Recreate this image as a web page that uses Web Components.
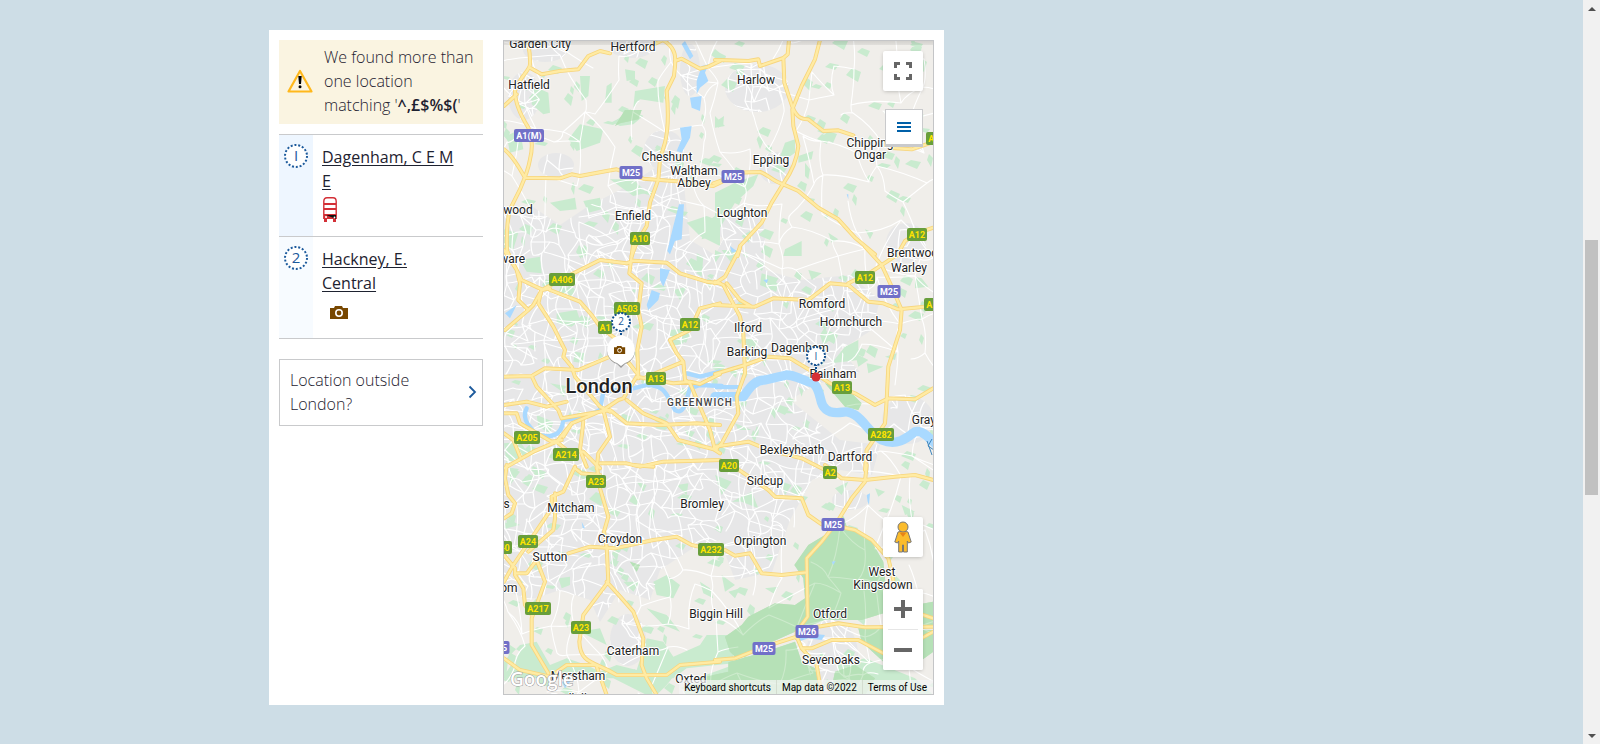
<!DOCTYPE html>
<html lang="en">
<head>
<meta charset="utf-8">
<meta name="viewport" content="width=device-width, initial-scale=1">
<title>Location results</title>
<style>
body{margin:0;background:#cddde6;font-family:"Open Sans","Noto Sans",sans-serif;font-size:16px;line-height:24px;color:#1e2230}
</style>
</head>
<body>
<page-shell>
  <results-card>
    <notice-box slot="list">We found more than one location matching '<strong>^,£$%$(</strong>'</notice-box>
    <place-row slot="list" number="1" kind="bus">Dagenham, C E M E</place-row>
    <place-row slot="list" number="2" kind="camera">Hackney, E. Central</place-row>
    <outside-link slot="list">Location outside London?</outside-link>
    <map-view slot="map"></map-view>
  </results-card>
</page-shell>
<script>
class Base extends HTMLElement{
  constructor(){super();this.attachShadow({mode:'open'});}
  connectedCallback(){if(!this.shadowRoot.firstChild)this.shadowRoot.innerHTML='<style>*{box-sizing:border-box}'+this.css()+'</style>'+this.html();}
}
const CAMERA='<path fill="#784700" d="M0 2h4l1-2h7l1 2h5v11H0z"/><circle cx="9" cy="7" r="3.2" fill="none" stroke="#fff" stroke-width="1.6"/>';

customElements.define('page-shell',class extends Base{
  css(){return `:host{display:flex;min-height:100vh}
    main{flex:1;min-width:0;padding:30px 16px 39px}
    .wrap{max-width:1045px;margin:0 auto}`}
  html(){return `<main><div class="wrap"><slot></slot></div></main><page-scrollbar></page-scrollbar>`}
});

customElements.define('page-scrollbar',class extends Base{
  css(){return `:host{box-sizing:border-box;display:grid;grid-template-rows:17px 223fr 255fr 232fr 17px;width:17px;height:100vh;position:sticky;top:0;background:#f1f1f1}
    i{grid-row:3;background:#c1c1c1;margin:0 2px}svg{display:block}.down{grid-row:5}`}
  html(){return `<svg width="17" height="17"><path d="M5 11l4-4 4 4z" fill="#505050"/></svg><i></i><svg class="down" width="17" height="17"><path d="M5 7l4 4 4-4z" fill="#505050"/></svg>`}
});

customElements.define('results-card',class extends Base{
  css(){return `:host{box-sizing:border-box;display:grid;grid-template-columns:204px 1fr;gap:20px;max-width:675px;padding:10px;background:#fff}
    .list{min-width:0}.map{min-width:0}`}
  html(){return `<div class="list"><slot name="list"></slot></div><div class="map"><slot name="map"></slot></div>`}
});

customElements.define('notice-box',class extends Base{
  css(){return `:host{box-sizing:border-box;display:grid;grid-template-columns:28px 1fr;gap:9px;align-items:center;padding:5px 4px 7px 8px;margin-bottom:10px;background:#faf4e1;font-weight:300}
    p{margin:0}svg{display:block}::slotted(strong){font-weight:600}`}
  html(){return `<svg width="26" height="24" viewBox="0 0 26 24"><path d="M13 2L24.5 22.500H1.500z" fill="none" stroke="#ffb81c" stroke-width="2.200" stroke-linejoin="round"/><path d="M11.300 7h3.400l-.7 8h-2z"/><circle cx="13" cy="17.800" r="1.500"/></svg><p><slot></slot></p>`}
});

customElements.define('place-row',class extends Base{
  css(){return `:host{box-sizing:border-box;display:grid;grid-template-columns:34px 1fr;gap:9px;border-top:1px solid #c9cacc;min-height:102px}
    :host([number="2"]){border-bottom:1px solid #c9cacc;margin-bottom:20px;min-height:103px;--tint:#f7fbff}
    .num{background:var(--tint,#eef6ff);padding:8px 4px}
    svg{display:block}
    .body{padding:10px 24px 10px 0}
    a{display:block;color:#1e2230;font-weight:500;text-decoration:underline;text-underline-offset:2px}
    text{font:400 15px "Open Sans",sans-serif;fill:#1c5a9c;text-anchor:middle}
    .bus{margin:4px 0 0 1px}.camera{margin:11px 0 0 8px}`}
  html(){const n=this.getAttribute('number'),bus=this.getAttribute('kind')==='bus';
    return `<div class="num"><svg width="26" height="26" viewBox="0 0 26 26"><circle cx="13" cy="13" r="11" fill="#fff" stroke="#1c5a9c" stroke-width="2" stroke-dasharray="2 1.840"/><text x="13" y="18">${n==='1'?'I':n}</text></svg></div>
    <div class="body"><a href="#place-${n}"><slot></slot></a>${bus?
    `<svg class="bus" width="14" height="25" viewBox="0 0 14 25" role="img" aria-label="Bus"><path d="M.8 22V4.500Q.8 .8 4 .8H10Q13.200 .8 13.200 4.500V22" fill="#fff" stroke="#d32f36" stroke-width="1.400"/><path d="M1 6h12v2H1zM1 11h12v2H1zM1 17h12v5H1zM1 22h3v3H1zM10 22h3v3h-3z" fill="#d32f36"/><path d="M3 18l10 0v4z" fill="#111"/><circle cx="3" cy="20" r="1.100" fill="#fff"/><circle cx="11.500" cy="20.500" r=".9" fill="#fff"/></svg>`:
    `<svg class="camera" width="18" height="13" viewBox="0 0 18 13" role="img" aria-label="Attraction">${CAMERA}</svg>`}</div>`}
});

customElements.define('outside-link',class extends Base{
  css(){return `:host{display:block;font-weight:300}
    a{display:flex;align-items:center;gap:10px;padding:8px 5px 9px 10px;border:1px solid #c9cacc;color:inherit;text-decoration:none}
    span{flex:1;padding-right:30px}svg{display:block}`}
  html(){return `<a href="#outside"><span><slot></slot></span><svg width="9" height="14" viewBox="0 0 9 14"><path d="M1.500 1.500L7 7l-5.500 5.500" fill="none" stroke="#1c5a9c" stroke-width="1.800"/></svg></a>`}
});

/* Main roads and areas, one sheet per tile: origin of the tile, then paths at three units to the pixel. */
const TILES=[
 {x:500,y:36,roads:`M80 0C85 30 92 50 90 85C88 105 60 120 45 165C45 200 60 235 85 275C95 310 100 330 90 370C85 400 75 425 60 460L30 520C20 560 18 600 22 660
  M12 210L50 175M90 95L125 115L180 105L235 100L265 60L300 45L330 52M440 35L485 14
  M485 10C540 40 525 80 522 120L500 165C505 220 505 280 495 320L480 370L475 430L450 500L440 570L410 620L395 660
  M12 340C40 360 60 400 75 425L180 427L215 415L240 420L320 405L350 400L430 428L530 436L640 450L665 438
  M525 75L545 68L600 98L625 92L660 75`,
  green:`M100 150L145 170L150 230L130 235L95 205ZM240 120L270 120L265 180L245 195ZM405 165L495 150L490 200L420 190L400 215ZM375 100L405 105L405 130L380 135ZM240 265L310 280L300 320L230 345L205 310ZM20 300L60 280L70 340L30 350ZM340 260L390 220L430 240L400 265L360 270ZM250 495L300 485L305 520L265 530ZM150 500L225 485L230 520L180 525ZM560 560L620 540L660 555V630L600 600ZM12 580L55 590L40 640L12 640ZM320 150L335 140V200L315 200ZM650 255L672 240L670 265L655 275ZM330 430L400 430L440 470L400 480Z`,
  deep:`M345 270L375 222L425 222L415 250L360 262Z`,
  water:`M545 25L555 15L580 60L570 70ZM590 135L605 90L625 85L615 110L625 135L600 155L590 175ZM570 185L605 180L600 225L575 215ZM540 275L575 270L570 305L545 350L530 345L545 310ZM537 505H552L545 610L525 615L510 655L502 645L520 570Z`},
 {x:715,y:36,roads:`M0 72L40 73L100 75L130 70L135 90L205 66L218 55L222 12M205 65L208 140L228 200C240 240 255 250 280 250L325 285L370 283L415 298
  M315 12L300 70L260 150L232 220L235 270L250 330C245 380 225 415 205 443L170 500L140 560L75 630L68 660
  M-5 442L30 430L60 410L135 408C160 415 170 435 205 445L250 465L310 515L370 550L420 605L480 655
  M520 335L590 340L655 318M655 575L610 590L570 615L545 660`,
  green:`M0 470L60 440L130 415L115 450L60 500L0 600L-40 610L-30 560L0 540ZM130 300L145 315L135 340L125 310ZM250 360L295 345L290 370L250 380ZM210 640L260 615L260 660H205ZM450 580L475 590L465 610ZM80 600L130 570L100 620ZM210 320L240 310L240 350L185 390ZM0 240L30 270L0 275ZM270 380L285 400L280 430L270 420ZM340 590L370 610L350 620Z`,
  deep:'',water:`M395 475L400 475L400 490ZM45 630L65 645L50 650Z`},
 {x:500,y:250,roads:`M12 0L50 60L60 100L55 150L85 180L100 165L125 120L150 115M20 0L65 90L125 118M85 180L15 240
  M125 120L210 75L300 30L380 40L400 32L500 38L540 70L620 95L660 100M400 -20L388 70L425 100L415 180L425 230L412 300L415 385
  M150 120L240 155L275 195L300 230L345 265L380 330L415 375M125 120L115 160L160 230L195 300L190 320L215 350L225 380L300 470L330 485
  M12 380L95 378L135 355L235 360L330 320L345 330M660 160L600 175L570 240L510 270L530 310L550 335L555 390L570 400L600 470L630 540L645 600L660 610
  M550 335L430 385M410 380L520 400L570 395L600 402L660 372M12 465L80 455L140 470L200 455M95 378L110 410L175 480L185 505
  M12 490L50 490L60 520L155 575L185 570M12 550L40 570L60 620M12 655L100 605L170 575L215 520L310 480L355 450L370 445L410 380
  M170 575L200 600L250 605L300 655M310 480L330 560L295 610L290 655M185 505L330 480L380 520L480 525L590 520L660 525
  M380 450L430 490L500 520L535 570L650 600M300 640L380 640L420 650L490 635L660 630M250 515L240 600L260 650M215 520L190 560`,
  green:`M60 30L120 20L125 70L80 65ZM170 190L230 180L240 210L215 230L170 220ZM225 305L255 310L250 340L220 335ZM590 10L610 20L605 80L590 70ZM510 240L560 235L550 280L510 290ZM110 495L160 515L150 550L115 530ZM12 580L60 575L85 610L20 640ZM365 490L395 500L390 520L365 510ZM555 540L585 545L570 570ZM150 400L210 410L180 420ZM520 120L560 110L540 150Z`,
  deep:'',water:`M480 55L510 60L490 110L480 90ZM455 120L480 130L475 150L445 180L440 165ZM15 190L50 165L30 205Z`,
  river:`M80 475C60 510 100 545 115 555C150 562 185 562 190 510L260 500L300 480L310 425L400 415L440 405C500 405 500 440 525 480C555 500 560 440 570 415L600 405L665 408M560 370L600 380L660 365`},
 {x:715,y:250,roads:`M0 165L120 170L175 145L280 150L345 100L400 105L460 155L505 160L550 178L655 168M0 95L25 105L75 200L85 250L90 370L65 440L70 490L20 580L0 600
  M35 100L75 150L110 170M75 -5L30 80L0 100M0 372L90 345L160 320L225 325L300 370L345 400L420 430L480 465L520 445L600 448L655 415
  M450 -10L500 45L530 110L560 180L555 240L520 350L515 450L510 520L455 600L450 660M400 100L470 65L550 12M0 590L100 575L160 600L260 625L330 660`,
  green:`M20 0L65 0L50 40ZM140 70L190 85L170 120L135 105ZM330 230L345 270L325 285L315 255ZM390 290L430 270L430 330L350 340ZM455 340L505 350L460 370ZM190 470L240 490L200 490ZM60 520L110 540L70 540ZM0 0L20 10L0 40ZM250 410L265 420L260 440ZM600 80L620 85L640 110L600 115ZM510 320L545 310L540 330ZM280 60L320 70L290 90ZM420 310L460 330L430 350Z`,
  deep:`M330 400L400 420L440 460L430 480L390 470Z`,water:`M145 90L160 88L155 100ZM0 405H80V418H0Z`,
  wide:`M0 440H85C100 420 115 390 150 390L215 375C240 375 260 390 295 400C325 425 305 470 345 485C380 495 390 475 420 495C450 515 460 545 500 570C550 590 580 560 600 545C620 540 640 560 665 585`},
 {x:500,y:465,roads:`M20 0L15 40L25 90L45 115L35 145L12 160M225 5L190 80L155 95L155 130L40 300L12 350M225 10L245 25L300 30M400 0L460 5
  M290 0L300 70L325 155L312 200L320 245L325 350L280 410L250 450L238 530C240 600 290 590 350 630M320 350L365 400L400 440L430 520L425 600L440 640L470 690
  M205 265L270 245L345 250L460 225L530 215L575 240L660 258M165 85L165 160L160 195L85 260M12 270L45 310L45 325L80 325L110 285L135 350L95 460L95 540L145 625
  M45 330L70 370L75 420L95 450M12 580L60 615L150 635L200 600L290 600L350 630L500 630L540 600L660 590M290 605L320 690`,
  green:`M12 0L60 20L30 60L30 10ZM410 50L440 60L430 80ZM530 60L565 55L560 90ZM20 160L60 180L20 190ZM460 350L500 330L540 360L520 400L470 390ZM370 350L420 350L400 380ZM175 340L210 335L210 360L185 370ZM12 590L60 540L110 530L150 600L200 580L260 600L300 620L350 600L410 615L440 520L490 530L520 575L600 540L620 510L700 510L700 595L560 610L520 640H12ZM440 430L500 450L540 500L490 480ZM240 500L300 490L320 540ZM20 620L60 560L30 540ZM90 420L110 400L105 450ZM340 640L520 635L500 660L470 690H440ZM550 680L590 640L700 600V690H560ZM600 350L630 370L640 400L610 385Z`,
  deep:`M390 290L420 300L410 320Z`,water:`M245 170L255 190L248 190ZM185 650L215 645L195 670Z`},
 {x:715,y:465,roads:`M0 585L60 580L150 545L245 515L310 485L370 475L450 487L655 485M245 520L245 500L278 455L275 280L320 230L370 165L410 100L450 50L455 0
  M245 515L260 550L290 550L350 525L430 525L505 565M260 550L305 600L320 690M350 180L420 195L470 225L520 280L535 345
  M65 10L160 75L180 95L260 100L280 150L320 178L350 182M330 0L380 40L450 45L540 35L600 30L655 45M30 255L60 272L105 265L140 325L200 330L275 322M655 460L610 445M655 500L600 530`,
  green:`M50 110L110 80L130 130L80 110ZM0 30L50 50L20 90ZM200 50L230 60L210 90ZM480 70L510 80L490 95ZM560 120L600 140L570 150ZM20 330L60 360L30 380ZM360 70L400 50L380 90ZM150 370L190 365L175 385ZM40 380L75 370L60 400ZM370 600L450 580L600 640L655 690H360Z`,
  deep:`M238 300L280 240L330 210L385 150L395 185L470 230L505 290L520 440L440 465L330 465L290 480L240 500L150 540L60 575L45 560L30 515L80 480L100 455L180 415L240 420L270 400L265 340ZM40 592L150 560L240 530L260 590L300 610L318 690H-20L-50 640L40 620ZM430 490L655 495V560L600 600L540 590L505 590L440 530ZM345 690L360 620L420 600L480 640L450 690ZM600 420L655 410V480H600Z`,
  water:`M235 515L280 505L330 510L320 525L280 520L250 530ZM455 90L465 85L462 120L458 110ZM350 290L362 288L355 300Z`}];

const URBAN='M504 215L530 205L560 225L590 205L620 190L660 165L680 150L690 240L715 255L730 225L765 235L765 270L800 280L850 275L880 300L872 330L840 350L860 372L815 385L790 400L840 440L880 445L872 475L840 470L812 480L790 520L772 572L735 580L720 540L690 550L660 570L650 600L620 590L600 622L590 600L560 590L530 600L504 590Z';
const TOWNS=[[524,96,16,24],[545,50,22,12],[632,48,22,10],[757,88,32,24],[775,168,16,16],[740,226,24,18],[832,655,26,36],[628,640,18,26],[906,243,20,20],[908,420,26,24],[664,150,20,20],[556,165,18,12],[690,70,10,26],[850,500,18,10]];
const LABELS=[['Garden City',540,48],['Hertford',633,51],['Hatfield',529,89],['Harlow',756,84],['Cheshunt',667,161],['Waltham',694,175],['Abbey',694,187],['Epping',771,164],['Chipping',870,147],['Ongar',870,159],['wood',518,214],['Enfield',633,220],['Loughton',742,217],['Edgware',502,263],['Brentwood',916,257],['Warley',909,272],['Romford',822,308],['Hornchurch',851,326],['Ilford',748,332],['Barking',747,356],['Dagenham',800,352],['Rainham',833,378],['Grays',927,424],['Bexleyheath',792,454],['Dartford',850,461],['Sidcup',765,485],['Mitcham',571,512],['Bromley',702,508],['Thames',488,508],['Croydon',620,543],['Orpington',760,545],['Sutton',550,561],['Epsom',499,592],['West',882,576],['Kingsdown',883,589],['Biggin Hill',716,618],['Otford',830,618],['Caterham',633,655],['Sevenoaks',831,664],['Merstham',578,680],['Oxted',691,683],['Redhill',569,703]];
const SHIELDS=[['A1(M)',529,135],['M25',631,172],['A10',640,238],['M25',733,176],['A12',917,234],['A128',939,138],['A406',562,279],['A503',627,308],['A1',605,327],['A12',690,324],['A12',865,277],['M25',889,291],['A127',937,304],['A13',656,378],['A205',527,437],['A214',566,454],['A13',842,387],['A282',881,434],['A20',729,465],['A2',830,472],['A23',596,481],['M25',833,524],['A24',528,541],['A240',499,547],['A232',711,549],['A217',538,608],['A23',581,627],['M26',807,631],['M25',764,648],['M25',498,647],['A4',496,364]];

function streets(){
  let s=77;const r=()=>(s=(s*16807)%2147483647)/2147483647;
  const mesh=(step,keep)=>{
    const pts=[];
    for(let y=36;y<710;y+=step){const row=[];for(let x=496;x<945;x+=step)row.push([x+(r()-.5)*step*.95,y+(r()-.5)*step*.95]);pts.push(row);}
    let d='';
    const seg=(a,b)=>{const mx=(a[0]+b[0])/2+(r()-.5)*step*.4,my=(a[1]+b[1])/2+(r()-.5)*step*.4;d+=`M${a.map(Math.round)}Q${Math.round(mx)} ${Math.round(my)} ${b.map(Math.round)}`;};
    pts.forEach((row,j)=>row.forEach((p,i)=>{if(row[i+1]&&r()<keep)seg(p,row[i+1]);if(pts[j+1]&&r()<keep)seg(p,pts[j+1][i]);if(pts[j+1]&&row[i+1]&&r()<.15)seg(p,pts[j+1][i+1]);}));
    return d;};
  let g='';
  for(let i=0;i<330;i++){const x=504+r()*430,y=41+r()*654,a=2+r()*6,b=2+r()*5;
    g+=`M${Math.round(x-a)} ${Math.round(y)}L${Math.round(x-a*.2)} ${Math.round(y-b)}L${Math.round(x+a)} ${Math.round(y-b*.4)}L${Math.round(x+a*.5)} ${Math.round(y+b)}Z`;}
  return {rural:mesh(28,.6),city:mesh(13,.76),parks:g};
}

customElements.define('map-view',class extends Base{
  css(){return `:host{box-sizing:border-box;display:block;position:relative;height:655px;border:1px solid #c4c5c7;overflow:hidden;font-family:Roboto,sans-serif;color:#000;font-weight:400}
    .canvas{display:block;width:100%;height:100%;background:#f0eeea}
    .lab{font:12px Roboto,sans-serif;fill:#222;text-anchor:middle;paint-order:stroke;stroke:#fff;stroke-width:2px;stroke-linejoin:round}
    .big{font-size:20px;font-weight:500}.area{font-size:10px;font-weight:500;letter-spacing:1px;fill:#444}
    .sh{font:700 9px Roboto,sans-serif;text-anchor:middle}
    .pin{font:400 10px "Open Sans",sans-serif;fill:#1c5a9c;text-anchor:middle}
    .logo{font:600 19px "Open Sans",sans-serif;fill:#fff;stroke:#9a9a9a;stroke-width:1px;paint-order:stroke}
    .shade{position:absolute;inset:0 0 auto;height:4px;background:linear-gradient(#0000001f,#00000010)}
    map-controls{position:absolute;inset:10px 10px 24px auto}
    footer{position:absolute;right:0;bottom:0;display:flex;font-size:10px;line-height:12px;background:#f5f5f5b8}
    footer>*{padding:2px 5px 0 5px;border:0;border-left:1px solid #d4ddd0;margin:0;color:#000;background:none;font:inherit;text-decoration:none;white-space:nowrap}
    footer>:first-child{border-left:0}footer>:last-child{padding-right:6px}`}
  html(){
    const st=streets(),g=(k,attr)=>TILES.map(t=>t[k]?`<path transform="translate(${t.x} ${t.y}) scale(.33333)" d="${t[k]}" ${attr}/>`:'').join('');
    const line='fill="none" stroke-linejoin="round" stroke-linecap="round"';
    const towns=TOWNS.map(t=>`<ellipse cx="${t[0]}" cy="${t[1]}" rx="${t[2]}" ry="${t[3]}"/>`).join('');
    const shields=SHIELDS.map(([t,x,y])=>{const w=t.length===5?30:t[0]==='M'?23:t.length*6+2,m=t[0]==='M'||t==='A1(M)';
      return `<rect x="${x-w/2}" y="${y-6}" width="${w}" height="13" rx="2" fill="${m?'#7170c8':'#689e3b'}"/><text class="sh" x="${x}" y="${y+4}" fill="${m?'#fff':'#ffe400'}">${t}</text>`}).join('');
    return `<svg class="canvas" viewBox="504 41 429 653" preserveAspectRatio="xMidYMid slice" role="img" aria-label="Map of London">
      <defs><clipPath id="city"><path d="${URBAN}"/>${towns}</clipPath></defs>
      <g fill="#e7e7e8"><path d="${URBAN}"/>${towns}</g>
      <path d="${st.parks}" fill="#c9ebcf"/>
      ${g('green','fill="#c9ebcf"')}${g('deep','fill="#b6e1b7"')}
      <g ${line} stroke="#fff"><path d="${st.rural}" stroke-width="1.100"/><path d="${st.city}" stroke-width="1.200" clip-path="url(#city)"/></g>
      ${g('deep','fill="#b6e1b7" fill-opacity=".7"')}
      ${g('water','fill="#a9d9ff"')}${g('river',line+' stroke="#a9d9ff" stroke-width="13"')}${g('wide',line+' stroke="#a9d9ff" stroke-width="28"')}
      ${g('roads',line+' stroke="#f7d57d" stroke-width="12"')}${g('roads',line+' stroke="#ffeba3" stroke-width="7"')}
      <g fill="none" stroke="#3f86bd" stroke-width="1"><path d="M927 441l5 14M932 439l-4 7 6 4"/></g>
      ${LABELS.map(([t,x,y])=>`<text class="lab" x="${x}" y="${y}">${t}</text>`).join('')}
      <text class="lab big" x="599" y="393">London</text><text class="lab area" x="700" y="406">GREENWICH</text>
      ${shields}
      <g stroke="#12508f" stroke-width="2"><path d="M621 330v9M816 364v11" stroke-dasharray="2 1"/><circle cx="621" cy="322" r="9" fill="#fff" stroke-dasharray="2 1.530"/><circle cx="816" cy="356" r="9" fill="#fff" stroke-dasharray="2 1.530"/></g>
      <text class="pin" x="621" y="325">2</text><text class="pin" x="816" y="360">I</text><circle cx="816" cy="377" r="4.500" fill="#d62f35"/>
      <path d="M621 368l-4-4a14 14 0 1 1 8 0z" fill="#777" opacity=".7"/><path d="M621 366l-4-3a14 14 0 1 1 8 0z" fill="#fff"/>
      <g transform="translate(614 346) scale(.62)">${CAMERA}</g>
      <text class="logo" x="510" y="686">Google</text>
    </svg><div class="shade"></div><map-controls></map-controls>
    <footer><button type="button">Keyboard shortcuts</button><span>Map data ©2022</span><a href="#terms">Terms of Use</a></footer>`}
});

customElements.define('map-controls',class extends Base{
  css(){return `:host{display:flex;flex-direction:column;align-items:flex-end}
    button{display:grid;place-items:center;width:40px;height:40px;padding:0;border:0;border-radius:2px;background:#fff;box-shadow:0 1px 4px -1px #0000004d}
    .menu{width:38px;height:38px;margin-top:18px;border:1px solid #c9cacc;border-bottom-width:3px;border-radius:0;box-shadow:none}
    .peg{margin-top:auto}
    .zoom{margin-top:32px;background:#fff;border-radius:2px;box-shadow:0 1px 4px -1px #0000004d}
    .zoom button{box-shadow:none}hr{border:0;height:1px;margin:0 5px;background:#e6e6e6}`}
  html(){return `<button aria-label="Toggle fullscreen view"><svg width="18" height="18"><path d="M1.500 6V1.500H6M12 1.500h4.500V6M16.500 12v4.500H12M6 16.500H1.500V12" fill="none" stroke="#666" stroke-width="3"/></svg></button>
    <button class="menu" aria-label="Map options"><svg width="14" height="10"><path d="M0 1h14M0 5h14M0 9h14" stroke="#0060a8" stroke-width="2"/></svg></button>
    <button class="peg" aria-label="Street View"><svg width="18" height="32" viewBox="0 0 18 32"><g fill="#fbbc2c" stroke="#777" stroke-width="1"><path d="M4 11Q9 9 14 11L17.200 21L14.500 22L13.300 20V31H9.500V24H8.500V31H4.700V20L3.500 22L.8 21Z"/><circle cx="9" cy="6" r="5"/></g><path d="M5.500 11.500h7L9 16z" fill="#e88416"/></svg></button>
    <div class="zoom"><button aria-label="Zoom in"><svg width="18" height="18"><path d="M0 9h18M9 0v18" stroke="#666" stroke-width="4"/></svg></button><hr><button aria-label="Zoom out"><svg width="18" height="18"><path d="M0 9h18" stroke="#666" stroke-width="4"/></svg></button></div>`}
});
</script>
</body>
</html>
